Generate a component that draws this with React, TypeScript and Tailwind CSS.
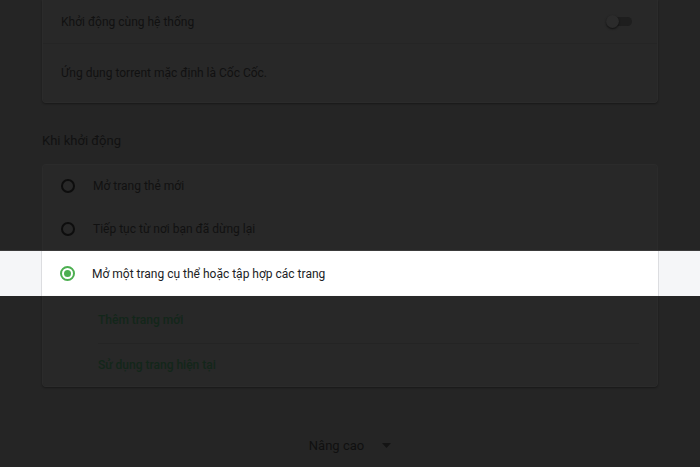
const font = { fontFamily: 'Roboto, "Noto Sans", sans-serif' }

function DimRadio() {
  return <span className="w-[14px] h-[14px] rounded-full border-2 border-[#0d0d0d] shrink-0" />
}

function ActiveRadio() {
  return (
    <span className="w-[15px] h-[15px] rounded-full border-2 border-[#4caf50] flex items-center justify-center shrink-0">
      <span className="w-[7px] h-[7px] rounded-full bg-[#4caf50]" />
    </span>
  )
}

export default function App() {
  return (
    <div className="w-[700px] h-[467px] overflow-hidden bg-[#252525] text-[12px] flex flex-col" style={font}>
      {/* ── System card (cut off at top) ── */}
      <div className="px-[42px]">
        <div className="bg-[#282828] rounded-b-[4px] border-x border-b border-[#2b2b2b] shadow-[0_1px_2px_rgba(0,0,0,0.35)] flex flex-col">
          <div className="h-[43px] px-[18px] flex items-center justify-between">
            <span className="text-[#111111]">Khởi động cùng hệ thống</span>
            <span className="relative w-[26px] h-[14px] mr-[7px] flex items-center">
              <span className="absolute left-[5px] right-0 h-[9px] rounded-full bg-[#1e1e1e]" />
              <span className="absolute left-0 w-[13px] h-[13px] rounded-full bg-[#2b2b2b] shadow-[0_1px_2px_rgba(0,0,0,0.6)]" />
            </span>
          </div>
          <div className="border-t border-[#252525] h-[59px] px-[18px] flex items-center">
            <span className="text-[#111111]">Ứng dụng torrent mặc định là Cốc Cốc.</span>
          </div>
        </div>
      </div>

      {/* ── On startup ── */}
      <div className="px-[42px] mt-[27px] h-[21px] flex items-center">
        <span className="text-[13px] text-[#111111]">Khi khởi động</span>
      </div>

      <div className="px-[42px] mt-[13px]">
        <div className="bg-[#282828] rounded-t-[4px] border-x border-t border-[#2b2b2b] flex flex-col">
          <div className="h-[42px] pl-[18px] flex items-center gap-[18px]">
            <DimRadio />
            <span className="text-[#111111]">Mở trang thẻ mới</span>
          </div>
          <div className="h-[43px] pl-[18px] flex items-center gap-[18px]">
            <DimRadio />
            <span className="text-[#111111]">Tiếp tục từ nơi bạn đã dừng lại</span>
          </div>
        </div>
      </div>

      {/* ── Spotlighted row ── */}
      <div className="h-[46px] bg-[#f5f6f8] border-t border-[#3a3a3a] px-[41px]">
        <div className="h-full bg-white border-x border-[#dcdde0] pl-[18px] flex items-center gap-[17px]">
          <ActiveRadio />
          <span className="text-[#202124]">Mở một trang cụ thể hoặc tập hợp các trang</span>
        </div>
      </div>

      <div className="px-[42px]">
        <div className="bg-[#282828] rounded-b-[4px] border-x border-b border-[#2b2b2b] shadow-[0_1px_2px_rgba(0,0,0,0.35)] flex flex-col pl-[55px] pr-[18px]">
          <div className="h-[47px] flex items-center">
            <span className="text-[#13261a] font-medium">Thêm trang mới</span>
          </div>
          <div className="h-[43px] border-t border-[#242424] flex items-center">
            <span className="text-[#13261a] font-medium">Sử dụng trang hiện tại</span>
          </div>
        </div>
      </div>

      {/* ── Advanced ── */}
      <div className="mt-[49px] flex items-center justify-center gap-[18px]">
        <span className="text-[13px] text-[#101010]">Nâng cao</span>
        <svg width="9" height="5" viewBox="0 0 9 5">
          <path d="M0 0 L4.5 5 L9 0 Z" fill="#141414" />
        </svg>
      </div>
    </div>
  )
}
